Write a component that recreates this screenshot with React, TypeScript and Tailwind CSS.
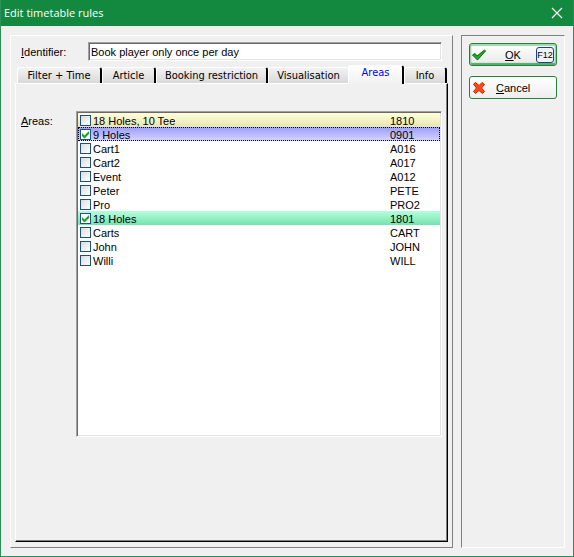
import { useState } from "react";

type Area = { name: string; code: string; checked?: boolean; tone?: string };

const areas: Area[] = [
  { name: "18 Holes, 10 Tee", code: "1810", tone: "bg-linear-to-b from-[#ffffdc] to-[#e9e5ae]" },
  {
    name: "9 Holes",
    code: "0901",
    checked: true,
    tone: "bg-linear-to-b from-[#9c9cff] to-[#d6d6ff] outline-1 -outline-offset-1 outline-dotted outline-black",
  },
  { name: "Cart1", code: "A016" },
  { name: "Cart2", code: "A017" },
  { name: "Event", code: "A012" },
  { name: "Peter", code: "PETE" },
  { name: "Pro", code: "PRO2" },
  { name: "18 Holes", code: "1801", checked: true, tone: "bg-linear-to-b from-[#b4ffdc] to-[#74e2ae]" },
  { name: "Carts", code: "CART" },
  { name: "John", code: "JOHN" },
  { name: "Willi", code: "WILL" },
];

const tabs = [
  { label: "Filter + Time", width: "w-[85px]" },
  { label: "Article", width: "w-[54px]" },
  { label: "Booking restriction", width: "w-[112px]" },
  { label: "Visualisation", width: "w-[80px]" },
  { label: "Areas", width: "w-[56px]" },
  { label: "Info", width: "w-[43px]" },
];

const sunken =
  "border border-t-[#a0a0a0] border-l-[#a0a0a0] border-r-white border-b-white bg-white shadow-[inset_1px_1px_0_#696969,inset_-1px_-1px_0_#e3e3e3]";

function AreaRow({ area }: { area: Area }) {
  const [checked, setChecked] = useState(!!area.checked);
  return (
    <li>
      <label className={`flex h-3.5 items-center pl-0.5 ${area.tone ?? ""}`}>
        <span className="grid size-[11px] shrink-0">
          <input
            type="checkbox"
            checked={checked}
            onChange={(e) => setChecked(e.target.checked)}
            className="col-start-1 row-start-1 size-[11px] appearance-none border border-[#1c5180] bg-linear-to-br from-[#dcdcd7] to-white checked:from-white"
          />
          {checked && (
            <svg viewBox="0 0 11 11" className="pointer-events-none col-start-1 row-start-1 size-[11px]">
              <path d="M2 4 L4.5 6.5 L9 2 V5 L4.5 9.5 L2 7 Z" fill="#21a121" />
            </svg>
          )}
        </span>
        <span className="flex-1 pt-px pl-0.5">{area.name}</span>
        <span className="w-[50px] pt-px">{area.code}</span>
      </label>
    </li>
  );
}

export default function App() {
  const [active, setActive] = useState("Areas");
  return (
    <div className="flex min-h-screen flex-col border border-t-0 border-[#2b9158] bg-[#f0f0f0] font-['Liberation_Sans',sans-serif] text-[11px] leading-[14px] text-black">
      <header className="flex h-[26px] items-center justify-between bg-[#12893e] pr-2 pl-[3px] text-white">
        <h1 className="font-['Open_Sans','Noto_Sans',sans-serif] text-[11px]">Edit timetable rules</h1>
        <button type="button" aria-label="Close" className="p-0.5">
          <svg viewBox="0 0 12 12" className="size-3">
            <path d="M1 1 L11 11 M11 1 L1 11" stroke="white" strokeWidth="1.2" fill="none" />
          </svg>
        </button>
      </header>

      <div className="flex flex-1 gap-2 px-2 pt-[9px] pb-2 pl-[9px]">
        <main className="flex min-w-0 flex-1 flex-col border border-t-white border-r-[#808080] border-b-[#808080] border-l-white px-1 pt-1.5 pb-[5px]">
          <div className="flex items-center pr-1.5 pl-1.5">
            <label htmlFor="identifier" className="w-[67px]">
              <u>I</u>dentifier:
            </label>
            <input
              id="identifier"
              defaultValue="Book player only once per day"
              className={`h-[19px] min-w-0 flex-1 px-0.5 ${sunken}`}
            />
          </div>

          <div
            role="tablist"
            className="mt-1 flex h-[18px] items-end pl-0.5 font-['DejaVu_Sans_Condensed','DejaVu_Sans',sans-serif] text-[11px]"
          >
            {tabs.map((t) => (
              <button
                key={t.label}
                type="button"
                role="tab"
                aria-selected={active === t.label}
                onClick={() => setActive(t.label)}
                className={`${t.width} shrink-0 rounded-t-[3px] border-t border-l border-white whitespace-nowrap ${
                  active === t.label
                    ? "relative -mb-px h-[19px] border-r-2 border-r-black bg-linear-to-b from-white to-[#f0f0f0] pb-1 text-[#0000ff]"
                    : t.label === "Visualisation"
                      ? "h-4 bg-linear-to-b from-[#f2f2f2] to-[#d9d9d9]"
                      : "h-4 border-r-2 border-r-black bg-linear-to-b from-[#f2f2f2] to-[#d9d9d9]"
                }`}
              >
                {t.label}
              </button>
            ))}
          </div>

          <section
            role="tabpanel"
            aria-label={active}
            className="flex-1 border border-t-white border-r-black border-b-black border-l-white"
          >
            <div className="h-full border-r border-b border-[#808080] pt-[27px] pr-1 pb-[103px] pl-[5px]">
              <div className="flex items-start">
                <span id="areas-label" className="w-[55px] pt-[3px]">
                  <u>A</u>reas:
                </span>
                <ul aria-labelledby="areas-label" className={`h-[326px] min-w-0 flex-1 p-px ${sunken}`}>
                  {areas.map((a) => (
                    <AreaRow key={a.code} area={a} />
                  ))}
                </ul>
              </div>
            </div>
          </section>
        </main>

        <aside className="flex w-[104px] shrink-0 flex-col gap-2.5 border border-t-[#808080] border-r-white border-b-white border-l-[#808080] px-[7px] pt-[7px]">
          <button
            type="button"
            className="flex h-[23px] items-center rounded-[3px] border border-[#25823b] bg-linear-to-b from-white to-[#e8e8e8] px-0.5 shadow-[inset_0_1px_1px_1px_#a5d5ae,inset_0_-1px_1px_1px_#55a567]"
          >
            <svg viewBox="0 0 14 12" className="h-3 w-3.5">
              <path d="M0.5 6 L3 4.5 L5 7 L12.5 1 L13.5 2 L5.5 11 Z" fill="#21ad21" stroke="#126612" strokeWidth="1" />
            </svg>
            <span className="flex-1 pl-1">
              <u>O</u>K
            </span>
            <kbd className="flex h-4 w-[18px] items-center justify-center rounded-[3px] border border-[#17447c] bg-[#f0f4fa] font-['Liberation_Sans_Narrow','Liberation_Sans',sans-serif] text-[9px]">
              F12
            </kbd>
          </button>
          <button
            type="button"
            className="flex h-[23px] items-center rounded-[3px] border border-[#25823b] bg-linear-to-b from-white to-[#eeeeee] px-[3px]"
          >
            <svg viewBox="0 0 12 12" className="size-3">
              <path
                d="M0.5 2 L2.5 0.5 L6 3.5 L9 0.5 L11.5 2.5 L8.5 6 L11.5 9.5 L9.5 11.5 L6 8.5 L2.5 11.5 L0.5 9.5 L3.5 6 Z"
                fill="#ff4a18"
                stroke="#c42400"
                strokeWidth="1"
              />
            </svg>
            <span className="pl-[11px]">
              <u>C</u>ancel
            </span>
          </button>
        </aside>
      </div>
    </div>
  );
}
